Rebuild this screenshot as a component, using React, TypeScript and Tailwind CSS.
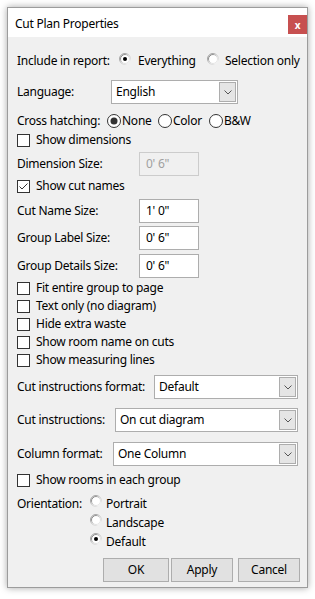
import React from "react";

function ClassicRadio({ checked }: { checked?: boolean }) {
  return (
    <svg width="12" height="12" viewBox="0 0 12 12" className="shrink-0">
      <defs>
        <linearGradient id="cro" x1="0" y1="0" x2="1" y2="1">
          <stop offset="0" stopColor="#8a8a8a" />
          <stop offset="0.55" stopColor="#c8c8c8" />
          <stop offset="1" stopColor="#ffffff" />
        </linearGradient>
        <linearGradient id="cri" x1="0" y1="0" x2="1" y2="1">
          <stop offset="0" stopColor="#5a5a5a" />
          <stop offset="0.55" stopColor="#d8d8d8" />
          <stop offset="1" stopColor="#eeeeee" />
        </linearGradient>
      </defs>
      <circle cx="6" cy="6" r="5.5" fill="#ffffff" stroke="url(#cro)" strokeWidth="1" />
      <circle cx="6" cy="6" r="4.5" fill="#ffffff" stroke="url(#cri)" strokeWidth="1" />
      {checked && <circle cx="6" cy="6" r="2" fill="#000000" />}
    </svg>
  );
}

function ModernRadio({ checked }: { checked?: boolean }) {
  return (
    <svg width="14" height="14" viewBox="0 0 14 14" className="shrink-0">
      <circle cx="7" cy="7" r="6.5" fill="#ffffff" stroke="#333333" strokeWidth="1" />
      {checked && <circle cx="7" cy="7" r="3.5" fill="#333333" />}
    </svg>
  );
}

function CheckBox({ checked, label }: { checked?: boolean; label: string }) {
  return (
    <div className="flex h-[18px] items-center">
      <div className="flex h-[13px] w-[13px] shrink-0 items-center justify-center border border-[#333333] bg-white">
        {checked && (
          <svg width="11" height="11" viewBox="0 0 11 11">
            <path d="M1.5 5.5 L4 8 L9.5 2.5" fill="none" stroke="#333333" strokeWidth="1" />
          </svg>
        )}
      </div>
      <span className="ml-[6px] whitespace-nowrap">{label}</span>
    </div>
  );
}

function Select({ value, w }: { value: string; w: string }) {
  return (
    <div className={`flex h-[24px] items-stretch border border-[#adadad] bg-white ${w}`}>
      <div className="flex flex-1 items-center pl-[4px] whitespace-nowrap">{value}</div>
      <div className="my-[1px] mr-[1px] flex w-[17px] items-center justify-center border border-[#adadad] bg-[#e5e5e5]">
        <svg width="8" height="5" viewBox="0 0 8 5">
          <path d="M0.5 0.5 L4 4 L7.5 0.5" fill="none" stroke="#555555" strokeWidth="1" />
        </svg>
      </div>
    </div>
  );
}

function SizeRow({ label, value, disabled }: { label: string; value: string; disabled?: boolean }) {
  return (
    <div className="flex h-[24px] items-center">
      <div className="w-[122px] whitespace-nowrap">{label}</div>
      <div
        className={`flex h-[24px] w-[60px] items-center pl-[6px] border ${
          disabled ? "border-[#cccccc] bg-[#f0f0f0] text-[#a0a0a0]" : "border-[#adadad] bg-white"
        }`}
      >
        {value}
      </div>
    </div>
  );
}

function Button({ label, w }: { label: string; w: string }) {
  return (
    <div className={`flex h-[24px] items-center justify-center border border-[#adadad] bg-[#e1e1e1] ${w}`}>
      {label}
    </div>
  );
}

export default function App() {
  return (
    <div className="h-[599px] w-[315px] bg-white pl-[7px] pt-[7px] font-['Noto_Sans',sans-serif] text-[12px] leading-none tracking-[-0.25px] text-black">
      <div className="flex h-[581px] w-[301px] flex-col border border-[#9c9c9c] shadow-[0_0_7px_rgba(0,0,0,0.35)]">
        {/* Title bar */}
        <div className="flex h-[29px] shrink-0 justify-between bg-white">
          <div className="ml-[7px] mt-[10px] text-[12px]">Cut Plan Properties</div>
          <div className="mt-[7px] flex h-[19px] w-[19px] items-center justify-center bg-[#c75050] text-[10px] font-bold text-white">
            x
          </div>
        </div>
        {/* Body */}
        <div className="flex flex-1 flex-col bg-[#f0f0f0] pl-[9px] pr-[6px]">
          {/* Include in report */}
          <div className="mt-[13px] flex h-[22px] items-center">
            <div className="w-[102px] whitespace-nowrap">Include in report:</div>
            <div className="flex w-[88px] items-center">
              <div className="-mt-[4px]"><ClassicRadio checked /></div>
              <span className="ml-[7px]">Everything</span>
            </div>
            <div className="flex items-center">
              <div className="-mt-[4px]"><ClassicRadio /></div>
              <span className="ml-[6px] whitespace-nowrap">Selection only</span>
            </div>
          </div>
          {/* Language */}
          <div className="mt-[8px] flex h-[24px] items-center">
            <div className="w-[94px]">Language:</div>
            <Select value="English" w="w-[127px]" />
          </div>
          {/* Cross hatching */}
          <div className="mt-[7px] flex h-[20px] items-center">
            <div className="w-[90px] whitespace-nowrap">Cross hatching:</div>
            <div className="flex w-[51px] items-center">
              <ModernRadio checked />
              <span className="ml-[1px]">None</span>
            </div>
            <div className="flex w-[51px] items-center">
              <ModernRadio />
              <span className="ml-[1px]">Color</span>
            </div>
            <div className="flex items-center">
              <ModernRadio />
              <span className="ml-[1px]">B&amp;W</span>
            </div>
          </div>
          <CheckBox label="Show dimensions" />
          <div className="mt-[3px]">
            <SizeRow label="Dimension Size:" value={"0' 6\""} disabled />
          </div>
          <div className="mt-[1px]">
            <CheckBox label="Show cut names" checked />
          </div>
          <div className="mt-[4px]">
            <SizeRow label="Cut Name Size:" value={"1' 0\""} />
          </div>
          <div className="mt-[3px]">
            <SizeRow label="Group Label Size:" value={"0' 6\""} />
          </div>
          <div className="mt-[4px]">
            <SizeRow label="Group Details Size:" value={"0' 6\""} />
          </div>
          <div className="mt-[1px] flex flex-col">
            <CheckBox label="Fit entire group to page" />
            <CheckBox label="Text only (no diagram)" />
            <CheckBox label="Hide extra waste" />
            <CheckBox label="Show room name on cuts" />
            <CheckBox label="Show measuring lines" />
          </div>
          <div className="mt-[6px] flex h-[24px] items-center">
            <div className="w-[137px] whitespace-nowrap">Cut instructions format:</div>
            <Select value="Default" w="w-[144px]" />
          </div>
          <div className="mt-[9px] flex h-[24px] items-center">
            <div className="w-[98px] whitespace-nowrap">Cut instructions:</div>
            <Select value="On cut diagram" w="w-[183px]" />
          </div>
          <div className="mt-[10px] flex h-[24px] items-center">
            <div className="w-[96px] whitespace-nowrap">Column format:</div>
            <Select value="One Column" w="w-[185px]" />
          </div>
          <div className="mt-[5px]">
            <CheckBox label="Show rooms in each group" />
          </div>
          <div className="mt-[5px] flex">
            <div className="flex h-[19px] w-[73px] items-center">Orientation:</div>
            <div className="flex flex-col">
              <div className="flex h-[19px] items-center">
                <div className="-mt-[5px]"><ClassicRadio /></div>
                <span className="ml-[4px]">Portrait</span>
              </div>
              <div className="flex h-[19px] items-center">
                <div className="-mt-[5px]"><ClassicRadio /></div>
                <span className="ml-[4px]">Landscape</span>
              </div>
              <div className="flex h-[19px] items-center">
                <div className="-mt-[5px]"><ClassicRadio checked /></div>
                <span className="ml-[4px]">Default</span>
              </div>
            </div>
          </div>
          <div className="mt-[7px] flex justify-end pr-[1px]">
            <Button label="OK" w="w-[66px]" />
            <div className="w-[2px]" />
            <Button label="Apply" w="w-[62px]" />
            <div className="w-[5px]" />
            <Button label="Cancel" w="w-[62px]" />
          </div>
        </div>
      </div>
    </div>
  );
}
